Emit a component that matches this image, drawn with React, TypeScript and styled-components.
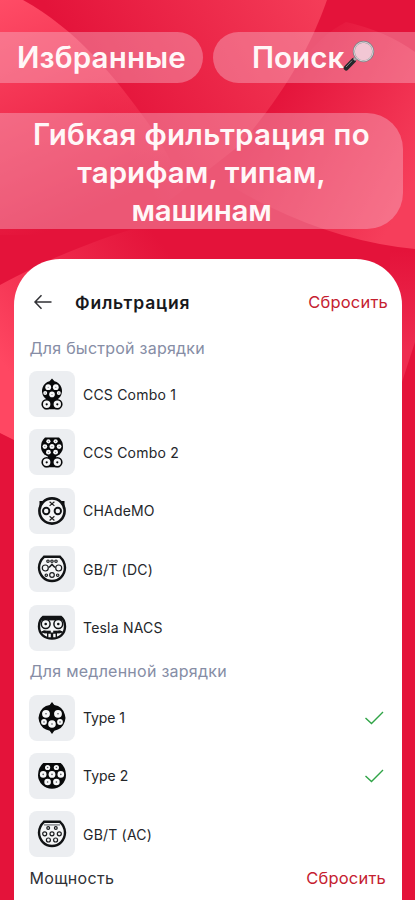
import React from "react";
import styled, { createGlobalStyle } from "styled-components";

const GlobalStyle = createGlobalStyle`
  * { box-sizing: border-box; }
  html, body { margin: 0; padding: 0; }
  body { width: 415px; height: 900px; overflow: hidden; background: #e4133a; }
`;

const Screen = styled.main`
  position: relative;
  isolation: isolate;
  width: 415px;
  height: 900px;
  overflow: hidden;
  background: #e4133a;
  font-family: Inter, "Liberation Sans", sans-serif;
`;

const Backdrop = styled.svg`
  position: absolute;
  inset: 0;
  z-index: -1;
`;

const ChipRow = styled.div`
  display: grid;
  grid-template-columns: 203px 1fr;
  gap: 10px;
  padding-top: 32px;
`;

const Chip = styled.div<{ $side: "left" | "right" }>`
  display: flex;
  align-items: center;
  height: 51px;
  padding-bottom: 1px;
  padding-left: ${(p) => (p.$side === "left" ? 17 : 39)}px;
  border-radius: ${(p) => (p.$side === "left" ? "0 26px 26px 0" : "26px 0 0 26px")};
  background: rgba(247, 190, 207, 0.4);
`;

const ChipText = styled.span<{ $track: number }>`
  color: #fff7f8;
  font-size: 29.5px;
  font-weight: 600;
  line-height: 38px;
  letter-spacing: ${(p) => p.$track}px;
  white-space: nowrap;
`;

const Banner = styled.h1`
  display: flex;
  flex-direction: column;
  align-items: center;
  width: 403px;
  height: 116px;
  margin: 30px 0 0;
  padding-top: 2px;
  border-radius: 0 36px 36px 0;
  background: rgba(247, 190, 207, 0.4);
`;

const Sheet = styled.section`
  width: 388px;
  height: 660px;
  margin: 30px 0 0 14px;
  padding: 23px 14px 0 16px;
  border-radius: 46px 46px 0 0;
  background: #fff;
`;

const Header = styled.header`
  display: flex;
  align-items: center;
  height: 40px;
`;

const BackArrow = styled.svg`
  width: 20px;
  height: 18px;
  margin: 0 22px 0 3px;
`;

const Title = styled.h2<{ $track: number }>`
  margin: 0;
  color: #17181c;
  font-size: 17.5px;
  font-weight: 600;
  letter-spacing: ${(p) => p.$track}px;
`;

const Reset = styled.span<{ $inset?: number }>`
  margin-left: auto;
  margin-right: ${(p) => p.$inset ?? 0}px;
  color: #c5202f;
  font-size: 16.5px;
  letter-spacing: 0.2px;
`;

const GroupTitle = styled.h3<{ $top: number; $track: number }>`
  height: 24px;
  margin: ${(p) => p.$top}px 0 0 -0.5px;
  color: #868da5;
  font-size: 16px;
  font-weight: 400;
  line-height: 24px;
  letter-spacing: ${(p) => p.$track}px;
  white-space: nowrap;
`;

const List = styled.ul`
  display: flex;
  flex-direction: column;
  gap: 12.4px;
  margin: 11.1px 0 0;
  padding: 0;
  list-style: none;
`;

const Row = styled.li`
  display: flex;
  align-items: center;
  height: 46px;
`;

const Tile = styled.div`
  display: grid;
  place-items: center;
  width: 46px;
  height: 46px;
  margin: 0 8px 0 -1px;
  border-radius: 8px;
  background: #eceef1;
`;

const Label = styled.span<{ $track: number }>`
  color: #24262a;
  font-size: 14px;
  letter-spacing: ${(p) => p.$track}px;
`;

const Check = styled.svg`
  width: 22px;
  height: 18px;
  margin-left: auto;
  margin-right: 3px;
`;

const Footer = styled.footer`
  display: flex;
  align-items: center;
  height: 24px;
  margin-top: 8.6px;
`;

const FooterLabel = styled.span`
  margin-left: -0.5px;
  color: #303136;
  font-size: 16px;
  letter-spacing: 0.3px;
`;

type Pin = [number, number, number];

const Pins = ({ pins, dot = 0.8 }: { pins: Pin[]; dot?: number }) => (
  <>
    {pins.map(([x, y, r], i) => (
      <g key={i}>
        <circle cx={x} cy={y} r={r} fill="#f7f8f9" />
        <circle cx={x} cy={y} r={dot} fill="#55585d" />
      </g>
    ))}
  </>
);

const Rings = ({ pins }: { pins: Pin[] }) => (
  <>
    {pins.map(([x, y, r], i) => (
      <circle key={i} cx={x} cy={y} r={r} fill="none" stroke="#191b1e" strokeWidth="1.2" />
    ))}
  </>
);

const Foot = () => (
  <>
    <path d="M12.5 19h7l1 4h3v8.2H8.5V23h3z" fill="#08090a" />
    {[10.7, 21.3].map((x) => (
      <g key={x}>
        <circle cx={x} cy="26.3" r="4.5" fill="#f5f6f7" stroke="#08090a" strokeWidth="1.6" />
        <circle cx={x} cy="26.3" r="1.1" fill="#08090a" />
      </g>
    ))}
  </>
);

const CapOutline = () => (
  <path
    d="M8 3.8H24C27 6.6 29 10 29 14.6C29 22 23.2 28 16 28S3 22 3 14.6C3 10 5 6.6 8 3.8Z"
    fill="#f5f6f7"
    stroke="#111315"
    strokeWidth="2.4"
  />
);

const icons = {
  ccs1: (
    <>
      <Foot />
      <path d="M16 .5l2.5 2.8A10 10 0 1 1 13.5 3.3Z" fill="#08090a" />
      <Pins pins={[[12.2, 9.2, 2.9], [19.8, 9.2, 2.9], [9.2, 14.9, 2], [16, 16.4, 2.8], [22.8, 14.9, 2]]} dot={0.5} />
    </>
  ),
  ccs2: (
    <>
      <Foot />
      <path d="M9 1.6H23Q27 5.2 27 10.8A11 10.5 0 0 1 5 10.8Q5 5.2 9 1.6Z" fill="#08090a" />
      <Pins pins={[[12.4, 5.3, 2.1], [19.6, 5.3, 2.1], [8.9, 10.6, 2.4], [16, 10.6, 2.5], [23.1, 10.6, 2.4], [12.4, 16.2, 2.4], [19.6, 16.2, 2.4]]} dot={0.5} />
    </>
  ),
  chademo: (
    <>
      <path d="M3.5 6h4.5L5.5 11h-2zM28.5 6h-4.5l2.5 5h2z" fill="#08090a" />
      <circle cx="16" cy="16" r="12.6" fill="#f5f6f7" stroke="#111315" strokeWidth="2.6" />
      <circle cx="10.2" cy="16" r="3.2" fill="none" stroke="#111315" strokeWidth="1.9" />
      <circle cx="21.8" cy="16" r="3.2" fill="none" stroke="#111315" strokeWidth="1.9" />
      <path d="M13.6 6.7l4.8 4.2m0-4.2l-4.8 4.2M13.6 21.3l4.8 4.2m0-4.2l-4.8 4.2" stroke="#222" strokeWidth="1.2" />
    </>
  ),
  gbdc: (
    <>
      <CapOutline />
      <Rings pins={[[12, 8.2, 1.2], [16, 8.2, 1.2], [20, 8.2, 1.2], [9.3, 15, 3], [22.7, 15, 3], [16, 22, 2.3], [10.3, 22.2, 1.2], [21.7, 22.2, 1.2]]} />
      <path d="M13 14.5L16 11.5l3 3" fill="none" stroke="#191b1e" strokeWidth="1.6" />
    </>
  ),
  tesla: (
    <>
      <path d="M7 5H25Q29 8 29 14.5C29 22 23.5 26.5 16 26.5S3 22 3 14.5Q3 8 7 5Z" fill="#f5f6f7" stroke="#111315" strokeWidth="2.4" />
      <path d="M5 5H27V8.4H5z" fill="#111315" />
      {[9.7, 22.3].map((x) => (
        <g key={x}>
          <circle cx={x} cy="12" r="4.4" fill="#f5f6f7" stroke="#111315" strokeWidth="1.5" />
          <circle cx={x} cy="12" r="1.3" fill="#111315" />
        </g>
      ))}
      <path d="M5.5 20Q7.5 18.2 11 19.2h10q3.5-1 5.5.8l-3 .9h-15z" fill="#111315" stroke="#111315" />
      <path d="M11 19h10v7.5H11z" fill="#111315" />
      <path d="M12.4 21.8h2.4v3.4h-2.4zM17.2 21.8h2.4v3.4h-2.4zM14.8 17.6h2.4v3h-2.4z" fill="#f5f6f7" />
    </>
  ),
  type1: (
    <>
      <path d="M16 0l2.3 3.1a13.2 13.2 0 0 1 10.5 9.4l.7 3.5-.7 3.5a13.2 13.2 0 0 1-10.5 9.2L16 32l-2.3-3.3a13.2 13.2 0 0 1-10.5-9.2L2.5 16l.7-3.5a13.2 13.2 0 0 1 10.5-9.4Z" fill="#08090a" />
      <Pins pins={[[10, 11.8, 3.9], [22, 11.8, 3.9], [8, 20, 2.9], [16, 22, 3.8], [24, 20, 2.9]]} />
    </>
  ),
  type2: (
    <>
      <path d="M7.3 3H24.7Q30 7.5 30 15A14 13.7 0 0 1 2 15Q2 7.5 7.3 3Z" fill="#08090a" />
      <Pins pins={[[11.6, 7.5, 2.6], [20.4, 7.5, 2.6], [7.2, 14.4, 3.3], [16, 14.4, 3.4], [24.8, 14.4, 3.3], [11.6, 22, 3.3], [20.4, 22, 3.3]]} />
    </>
  ),
  gbac: (
    <>
      <CapOutline />
      <path d="M8 6.9h16" stroke="#777b80" strokeWidth="1.3" />
      <Rings pins={[[12.2, 10, 1.4], [19.8, 10, 1.4], [8.7, 15.8, 2], [16, 15.8, 2], [23.3, 15.8, 2], [12.4, 22, 2], [19.6, 22, 2]]} />
    </>
  ),
};

type IconName = keyof typeof icons;
type Item = { icon: IconName; label: string; track: number; checked?: boolean };

const fast: Item[] = [
  { icon: "ccs1", label: "CCS Combo 1", track: 0.2 },
  { icon: "ccs2", label: "CCS Combo 2", track: 0.2 },
  { icon: "chademo", label: "CHAdeMO", track: 0.2 },
  { icon: "gbdc", label: "GB/T (DC)", track: 0.2 },
  { icon: "tesla", label: "Tesla NACS", track: 0.2 },
];

const slow: Item[] = [
  { icon: "type1", label: "Type 1", track: -0.1, checked: true },
  { icon: "type2", label: "Type 2", track: 0, checked: true },
  { icon: "gbac", label: "GB/T (AC)", track: 0.2 },
];

const Connectors = ({ items }: { items: Item[] }) => (
  <List>
    {items.map((item) => (
      <Row key={item.label}>
        <Tile>
          <svg width="32" height="32" viewBox="0 0 32 32">{icons[item.icon]}</svg>
        </Tile>
        <Label $track={item.track}>{item.label}</Label>
        {item.checked && (
          <Check viewBox="0 0 22 18" fill="none">
            <path d="M2.5 9l6 5.6L20 3" stroke="#30a447" strokeWidth="1.4" />
          </Check>
        )}
      </Row>
    ))}
  </List>
);

const MagnifierIcon = styled.svg`
  margin-left: -1px;
  flex: none;
`;

const Magnifier = () => (
  <MagnifierIcon width="32" height="34" viewBox="0 0 32 34">
    <path d="M3.2 28L10.5 20.5" stroke="#25272a" strokeWidth="5" strokeLinecap="round" />
    <path d="M3 27L9 20.7" stroke="#85868a" strokeWidth="1" />
    <path d="M11 20l2.8-2.7" stroke="#b1aeb2" strokeWidth="3" />
    <circle cx="20.5" cy="11.5" r="9.7" fill="#f2c7d4" stroke="#818087" strokeWidth="2" />
    <circle cx="20.5" cy="11.5" r="9.5" fill="none" stroke="#d2cfd2" strokeWidth="1.1" />
  </MagnifierIcon>
);

export default function App() {
  return (
    <>
      <GlobalStyle />
      <Screen>
        <Backdrop width="415" height="900" viewBox="0 0 415 900">
          <defs>
            <linearGradient id="mid" x1="110" y1="120" x2="320" y2="0" gradientUnits="userSpaceOnUse">
              <stop stopColor="#f43c58" stopOpacity="0" />
              <stop offset="1" stopColor="#f43c58" />
            </linearGradient>
            <linearGradient id="left" x1="0" y1="0" x2="95" y2="210" gradientUnits="userSpaceOnUse">
              <stop stopColor="#ff4c66" />
              <stop offset="1" stopColor="#ff4c66" stopOpacity="0" />
            </linearGradient>
            <linearGradient id="right" x1="265" y1="110" x2="410" y2="190" gradientUnits="userSpaceOnUse">
              <stop stopColor="#f63e5b" stopOpacity="0" />
              <stop offset="1" stopColor="#f63e5b" />
            </linearGradient>
            <linearGradient id="low" x1="0" y1="360" x2="160" y2="240" gradientUnits="userSpaceOnUse">
              <stop stopColor="#ff4762" />
              <stop offset="1" stopColor="#f63e5b" stopOpacity="0" />
            </linearGradient>
            <linearGradient id="edge" x1="0" y1="250" x2="0" y2="350" gradientUnits="userSpaceOnUse">
              <stop stopColor="#ee2c50" stopOpacity="0" />
              <stop offset="1" stopColor="#ee2c50" />
            </linearGradient>
          </defs>
          <path d="M0 0H327C310 48 285 92 240 145L170 200H0Z" fill="url(#mid)" />
          <path d="M0 0H23C75 29 112 72 153 130Q172 160 190 200L160 235H0Z" fill="url(#left)" />
          <path d="M0 285C50 258 90 242 145 225L300 235V440H14L0 433Z" fill="url(#low)" />
          <path d="M346 22Q386 31 415 52V249Q342 242 270 207C235 190 210 174 190 150L258 120C290 80 310 40 346 22Z" fill="url(#right)" />
          <path d="M390 249H415V342L402 382H390Z" fill="url(#edge)" />
        </Backdrop>

        <ChipRow>
          <Chip $side="left"><ChipText $track={0.15}>Избранные</ChipText></Chip>
          <Chip $side="right"><ChipText $track={0.05}>Поиск</ChipText><Magnifier /></Chip>
        </ChipRow>

        <Banner>
          <ChipText $track={0.3}>Гибкая фильтрация по</ChipText>
          <ChipText $track={0.05}>тарифам, типам,</ChipText>
          <ChipText $track={-0.3}>машинам</ChipText>
        </Banner>

        <Sheet>
          <Header>
            <BackArrow viewBox="0 0 20 18" fill="none">
              <path d="M18.5 9H2M8.5 2.2L2 9l6.5 6.8" stroke="#303135" strokeWidth="1.5" />
            </BackArrow>
            <Title $track={0.8}>Фильтрация</Title>
            <Reset>Сбросить</Reset>
          </Header>
          <GroupTitle $top={14} $track={0.24}>Для быстрой зарядки</GroupTitle>
          <Connectors items={fast} />
          <GroupTitle $top={8.8} $track={0.25}>Для медленной зарядки</GroupTitle>
          <Connectors items={slow} />
          <Footer>
            <FooterLabel>Мощность</FooterLabel>
            <Reset $inset={2}>Сбросить</Reset>
          </Footer>
        </Sheet>
      </Screen>
    </>
  );
}
